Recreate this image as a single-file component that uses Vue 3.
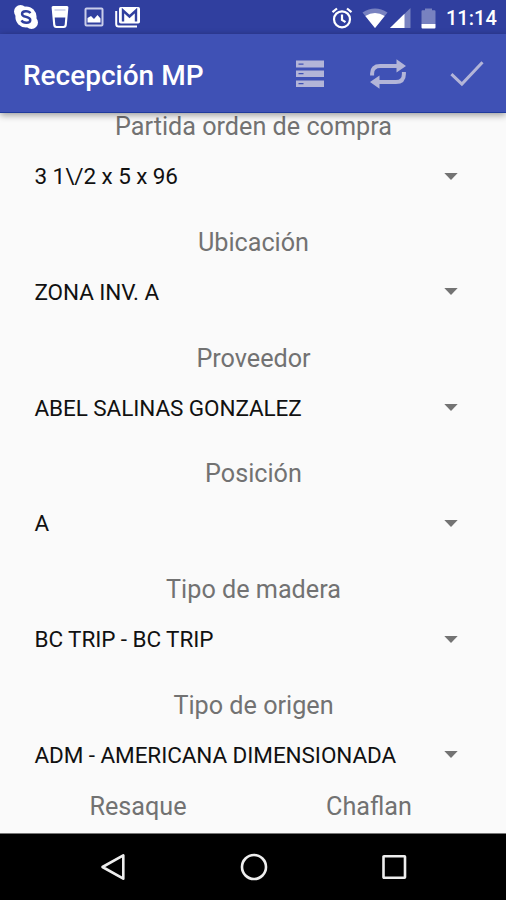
<template>
  <div class="screen">
    <header class="status-bar">
      <div class="notifications">
        <svg class="skype" width="26" height="26" viewBox="0 0 26 26">
          <circle cx="13" cy="13" r="10.6" />
          <circle cx="7.5" cy="7.5" r="6.5" />
          <circle cx="18.5" cy="18.5" r="6.5" />
          <path
            class="skype-s"
            d="M17.3 9.2C16 6.6 9 6.400 9 9.900c0 3.900 8.300 2.200 8.300 6.100 0 3.700-7.300 3.400-8.800.4"
          />
        </svg>
        <svg class="cup" width="18" height="24" viewBox="0 0 18 24">
          <path
            fill-rule="evenodd"
            d="M2 1h14q1.500 0 1.400 1.500L15.800 20q-.3 3-3 3H5.200q-2.700 0-3-3L.6 2.500Q.5 1 2 1zM3.700 12.500l.6 7q.2 1.500 1.700 1.500h6q1.500 0 1.700-1.500l.6-7z"
          />
          <path class="cup-line" d="M3.500 5h11" />
        </svg>
        <svg class="picture" width="20" height="20" viewBox="0 0 20 20">
          <rect class="picture-frame" x="1.500" y="1.500" width="17" height="17" rx="1" />
          <path d="M3.500 15.500V11l3.500-2 3 3 3.500-4 3 3.500v4z" />
        </svg>
        <svg class="mail" width="26" height="22" viewBox="0 0 26 22">
          <path class="mail-back" d="M1.200 5v13q0 2.500 2.500 2.500H22" />
          <rect x="4" y="1" width="21" height="16.500" rx="1.800" />
          <path class="mail-m" d="M8 15.500V4.500l6.500 6 6.500-6v11" />
        </svg>
      </div>
      <div class="system">
        <svg class="alarm" width="22" height="22" viewBox="0 0 22 22">
          <circle cx="11" cy="12.300" r="8" />
          <path d="M11 7.500v5.300l3.500 2.400M1.500 5.200 6 1.500M16 1.500l4.500 3.700" />
        </svg>
        <svg class="wifi" width="26" height="21" viewBox="0 0 26 21">
          <path class="faded" d="M13 20 .5 4.500Q13-3.500 25.500 4.500z" />
          <path d="M13 20 3.300 8Q13 1.800 22.700 8z" />
        </svg>
        <svg class="signal" width="21" height="20" viewBox="0 0 21 20">
          <path class="faded" d="M0 20 20.500 0v20z" />
          <path d="M0 20 14.500 5.800V20z" />
        </svg>
        <svg class="battery" width="15" height="21" viewBox="0 0 15 21">
          <path class="faded" d="M1.500 2.300H4V.5h7v1.800h2.500q1 0 1 1V16H.5V3.300q0-1 1-1z" />
          <path d="M.5 16h14v3.500q0 1-1 1h-12q-1 0-1-1z" />
        </svg>
        <span class="clock">11:14</span>
      </div>
    </header>

    <div class="toolbar">
      <h1>Recepción MP</h1>
      <div class="actions">
        <svg class="list" width="28" height="28" viewBox="0 0 28 28">
          <path
            fill-rule="evenodd"
            d="M0 .5h28v7H0zM2.500 3.500v1.300h5V3.500zM0 10.500h28v6.500H0zM2.500 13v1.300h5V13zM0 20.500h28V27H0zM2.500 23v1.300h5V23z"
          />
        </svg>
        <svg class="repeat" width="36" height="32" viewBox="0 0 36 32">
          <path class="repeat-line" d="M2.100 17.500v-2q0-7.500 8-7.500H28M33.900 14v2q0 8-8 8H8" />
          <path d="M26.500 1.300 36 8l-9.500 6.500zM9.500 17.500 0 24l9.500 6.700z" />
        </svg>
        <svg class="check" width="34" height="27" viewBox="0 0 34 27">
          <path d="m1.400 14.200 10.500 9.900L32.500 2.200" />
        </svg>
      </div>
    </div>

    <main class="form">
      <div v-for="field in fields" :key="field.label" class="field">
        <label>{{ field.label }}</label>
        <div class="spinner">
          <span>{{ field.value }}</span>
          <svg width="14" height="7" viewBox="0 0 14 7">
            <path d="M.3 0h13.400L7 7z" />
          </svg>
        </div>
      </div>
      <div class="columns">
        <label>Resaque</label>
        <label>Chaflan</label>
      </div>
    </main>

    <nav class="nav-bar">
      <svg width="28" height="30" viewBox="0 0 28 30">
        <path d="M24.300 3.300v23.400L3.500 15z" />
      </svg>
      <svg width="28" height="30" viewBox="0 0 28 30">
        <circle cx="14" cy="15" r="12" />
      </svg>
      <svg width="28" height="30" viewBox="0 0 28 30">
        <rect x="3.500" y="4.300" width="21.500" height="21.500" rx=".5" />
      </svg>
    </nav>
  </div>
</template>

<script setup>
import { ref } from "vue";

const fields = ref([
  { label: "Partida orden de compra", value: "3 1\\/2 x 5 x 96" },
  { label: "Ubicación", value: "ZONA INV. A" },
  { label: "Proveedor", value: "ABEL SALINAS GONZALEZ" },
  { label: "Posición", value: "A" },
  { label: "Tipo de madera", value: "BC TRIP - BC TRIP" },
  { label: "Tipo de origen", value: "ADM - AMERICANA DIMENSIONADA" },
]);
</script>

<style>
body {
  margin: 0;
}
</style>

<style scoped>
.screen {
  display: flex;
  flex-direction: column;
  width: 506px;
  height: 900px;
  background-color: #fafafa;
  font-family: Roboto, sans-serif;
}

svg {
  display: block;
  flex: none;
}

.status-bar {
  display: flex;
  justify-content: space-between;
  flex: none;
  height: 34px;
  box-sizing: border-box;
  padding: 0 10px 0 13px;
  background-color: #303f9f;
  color: #fff;
}

.status-bar svg {
  fill: #fff;
}

.notifications,
.system {
  display: flex;
  align-items: center;
}

.cup {
  margin-left: 12px;
}

.picture {
  margin-left: 15px;
}

.mail {
  margin-left: 11px;
}

.status-bar .skype-s,
.status-bar .cup-line,
.status-bar .mail-m {
  fill: none;
  stroke: #303f9f;
  stroke-width: 2.4;
}

.status-bar .cup-line {
  stroke-width: 1;
  opacity: 0.4;
}

.picture-frame {
  fill: none;
  stroke: #c9cdea;
  stroke-width: 2;
}

.mail-back {
  fill: none;
  stroke: #fff;
  stroke-width: 2;
}

.status-bar .alarm {
  fill: none;
  stroke: #fff;
  stroke-width: 2.2;
}

.system svg {
  margin-top: 2px;
}

.wifi {
  margin-left: 9px;
}

.signal {
  margin-left: 2px;
}

.battery {
  margin-left: 10px;
}

.faded {
  opacity: 0.35;
}

.clock {
  width: 50px;
  margin-left: 10px;
  padding-top: 2px;
  font-size: 20px;
  font-weight: 500;
  line-height: 32px;
  white-space: nowrap;
}

.toolbar {
  position: relative;
  display: flex;
  align-items: center;
  justify-content: space-between;
  flex: none;
  height: 79px;
  box-sizing: border-box;
  padding: 1px 22px 0 23px;
  border-bottom: 1px solid #1f3a9c;
  background-color: #3f51b5;
  box-shadow: 0 2px 7px rgba(0, 0, 0, 0.4);
}

h1 {
  margin: 0;
  padding-top: 4px;
  color: #fff;
  font-size: 28px;
  font-weight: 500;
  line-height: 32px;
}

.actions {
  display: flex;
  align-items: center;
  fill: #b3b5d8;
}

.repeat {
  margin-left: 46px;
}

.check {
  margin-left: 44px;
}

.repeat-line,
.check {
  fill: none;
  stroke: #b3b5d8;
  stroke-width: 4;
}

.check {
  stroke-width: 3;
}

.form {
  flex: none;
  height: 720px;
}

.field {
  height: 115.8px;
}

label {
  display: block;
  padding-left: 1px;
  color: #727272;
  font-size: 25.2px;
  line-height: 28px;
  text-align: center;
}

.spinner {
  display: flex;
  align-items: center;
  justify-content: space-between;
  height: 70px;
  padding: 0 48px 0 34.5px;
  color: #111;
  font-size: 22.5px;
  letter-spacing: -0.08px;
  white-space: nowrap;
}

.spinner svg {
  fill: #737373;
}

.columns {
  display: grid;
  grid-template-columns: 1fr 1fr;
  margin-top: -14.5px;
  padding: 0 22px;
}

.nav-bar {
  display: flex;
  align-items: center;
  justify-content: space-between;
  flex: 1;
  padding: 0 98px 0 99px;
  border-top: 1px solid #777;
  background-color: #000;
}

.nav-bar svg {
  fill: none;
  stroke: #eee;
  stroke-width: 2.6;
  stroke-linejoin: round;
}
</style>
